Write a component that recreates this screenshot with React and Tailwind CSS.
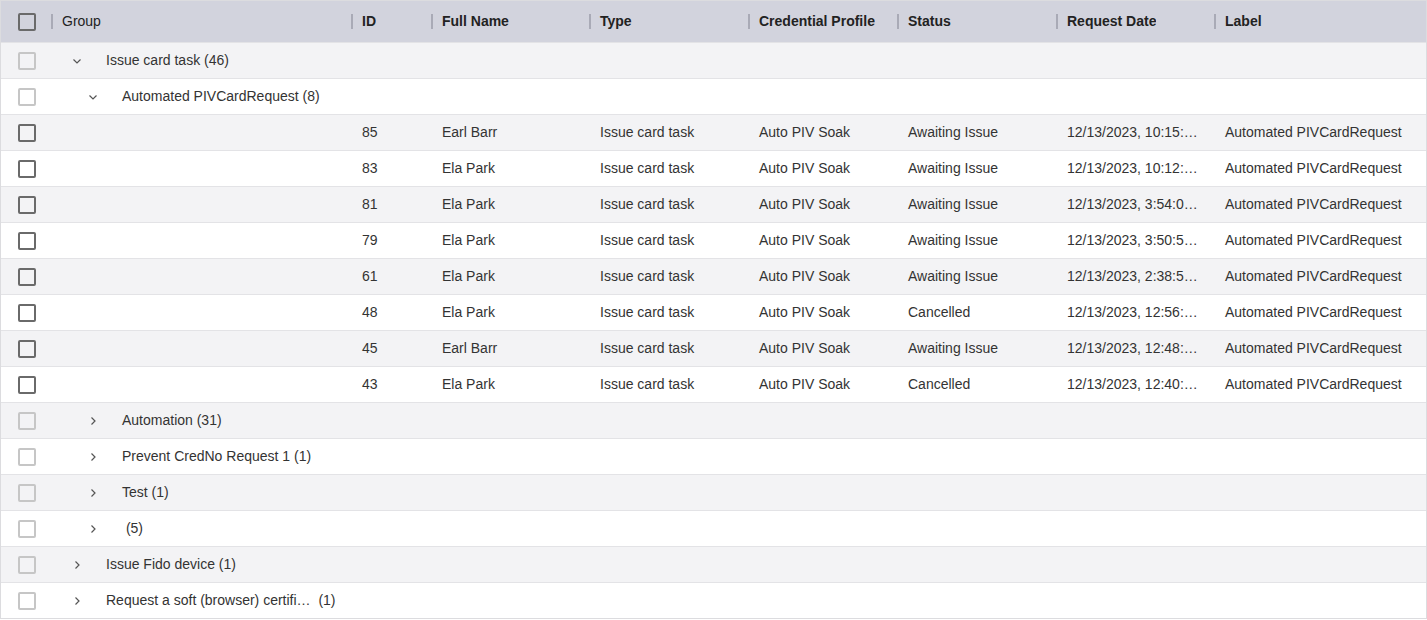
import React from 'react';

const cols = 'grid grid-cols-[52px_300px_80px_158px_159px_149px_159px_158px_1fr]';

const headers = ['ID', 'Full Name', 'Type', 'Credential Profile', 'Status', 'Request Date', 'Label'];

const rows = [
  { kind: 'group', level: 1, open: true, text: 'Issue card task (46)' },
  { kind: 'group', level: 2, open: true, text: 'Automated PIVCardRequest (8)' },
  { kind: 'data', id: '85', name: 'Earl Barr', status: 'Awaiting Issue', date: '12/13/2023, 10:15:32 AM' },
  { kind: 'data', id: '83', name: 'Ela Park', status: 'Awaiting Issue', date: '12/13/2023, 10:12:18 AM' },
  { kind: 'data', id: '81', name: 'Ela Park', status: 'Awaiting Issue', date: '12/13/2023, 3:54:08 AM' },
  { kind: 'data', id: '79', name: 'Ela Park', status: 'Awaiting Issue', date: '12/13/2023, 3:50:51 AM' },
  { kind: 'data', id: '61', name: 'Ela Park', status: 'Awaiting Issue', date: '12/13/2023, 2:38:55 AM' },
  { kind: 'data', id: '48', name: 'Ela Park', status: 'Cancelled', date: '12/13/2023, 12:56:40 AM' },
  { kind: 'data', id: '45', name: 'Earl Barr', status: 'Awaiting Issue', date: '12/13/2023, 12:48:22 AM' },
  { kind: 'data', id: '43', name: 'Ela Park', status: 'Cancelled', date: '12/13/2023, 12:40:11 AM' },
  { kind: 'group', level: 2, open: false, text: 'Automation (31)' },
  { kind: 'group', level: 2, open: false, text: 'Prevent CredNo Request 1 (1)' },
  { kind: 'group', level: 2, open: false, text: 'Test (1)' },
  { kind: 'group', level: 2, open: false, text: ' (5)' },
  { kind: 'group', level: 1, open: false, text: 'Issue Fido device (1)' },
  { kind: 'group', level: 1, open: false, text: 'Request a soft (browser) certifi…  (1)' },
];

const Check = ({ light }) => (
  <div
    className={
      'w-[18px] h-[18px] rounded-[2px] border-2 ' +
      (light ? 'border-[#c6c6c6]' : 'border-[#6a6a6a]')
    }
  />
);

const Chevron = ({ open }) => (
  <svg width="12" height="12" viewBox="0 0 12 12" fill="none" stroke="#555" strokeWidth="1.2">
    {open ? <path d="M2.5 4.5 L6 8 L9.5 4.5" /> : <path d="M4.5 2.5 L8 6 L4.5 9.5" />}
  </svg>
);

const Sep = () => <div className="ml-auto w-[2px] h-[15px] bg-[#a9aab6] shrink-0" />;

export default function App() {
  return (
    <div
      className="w-[1427px] h-[620px] bg-white overflow-hidden text-[14px] text-[#333]"
      style={{ fontFamily: '"Liberation Sans", Arial, sans-serif' }}
    >
      <div className="border border-[#dcdcdf]">
        <div className={cols + ' h-[41px] bg-[#d2d3dd] items-center text-[#222]'}>
          <div className="flex items-center pl-[17px] h-full">
            <Check />
            <Sep />
          </div>
          <div className="flex items-center h-full">
            <span className="pl-[9px]">Group</span>
            <Sep />
          </div>
          {headers.map((h, i) => (
            <div key={h} className="flex items-center h-full">
              <span className="pl-[9px] font-bold truncate">{h}</span>
              {i < headers.length - 1 && <Sep />}
            </div>
          ))}
        </div>
        {rows.map((r, i) => (
          <div
            key={i}
            className={
              cols +
              ' h-[36px] items-center border-t border-[#e3e3e6] ' +
              (i % 2 === 0 ? 'bg-[#f3f3f5]' : 'bg-white')
            }
          >
            <div className="pl-[17px] flex items-center">
              <Check light={r.kind === 'group'} />
            </div>
            {r.kind === 'group' ? (
              <div
                className={
                  'col-span-8 flex items-center ' + (r.level === 1 ? 'pl-[18px]' : 'pl-[34px]')
                }
              >
                <span className="w-[12px] flex items-center justify-center">
                  <Chevron open={r.open} />
                </span>
                <span className="ml-[23px] whitespace-pre">{r.text}</span>
              </div>
            ) : (
              <>
                <div />
                <div className="pl-[9px] truncate">{r.id}</div>
                <div className="pl-[9px] truncate">{r.name}</div>
                <div className="pl-[9px] truncate">Issue card task</div>
                <div className="pl-[9px] truncate">Auto PIV Soak</div>
                <div className="pl-[9px] truncate">{r.status}</div>
                <div className="pl-[9px] pr-[12px] truncate">{r.date}</div>
                <div className="pl-[9px] truncate">Automated PIVCardRequest</div>
              </>
            )}
          </div>
        ))}
      </div>
    </div>
  );
}
